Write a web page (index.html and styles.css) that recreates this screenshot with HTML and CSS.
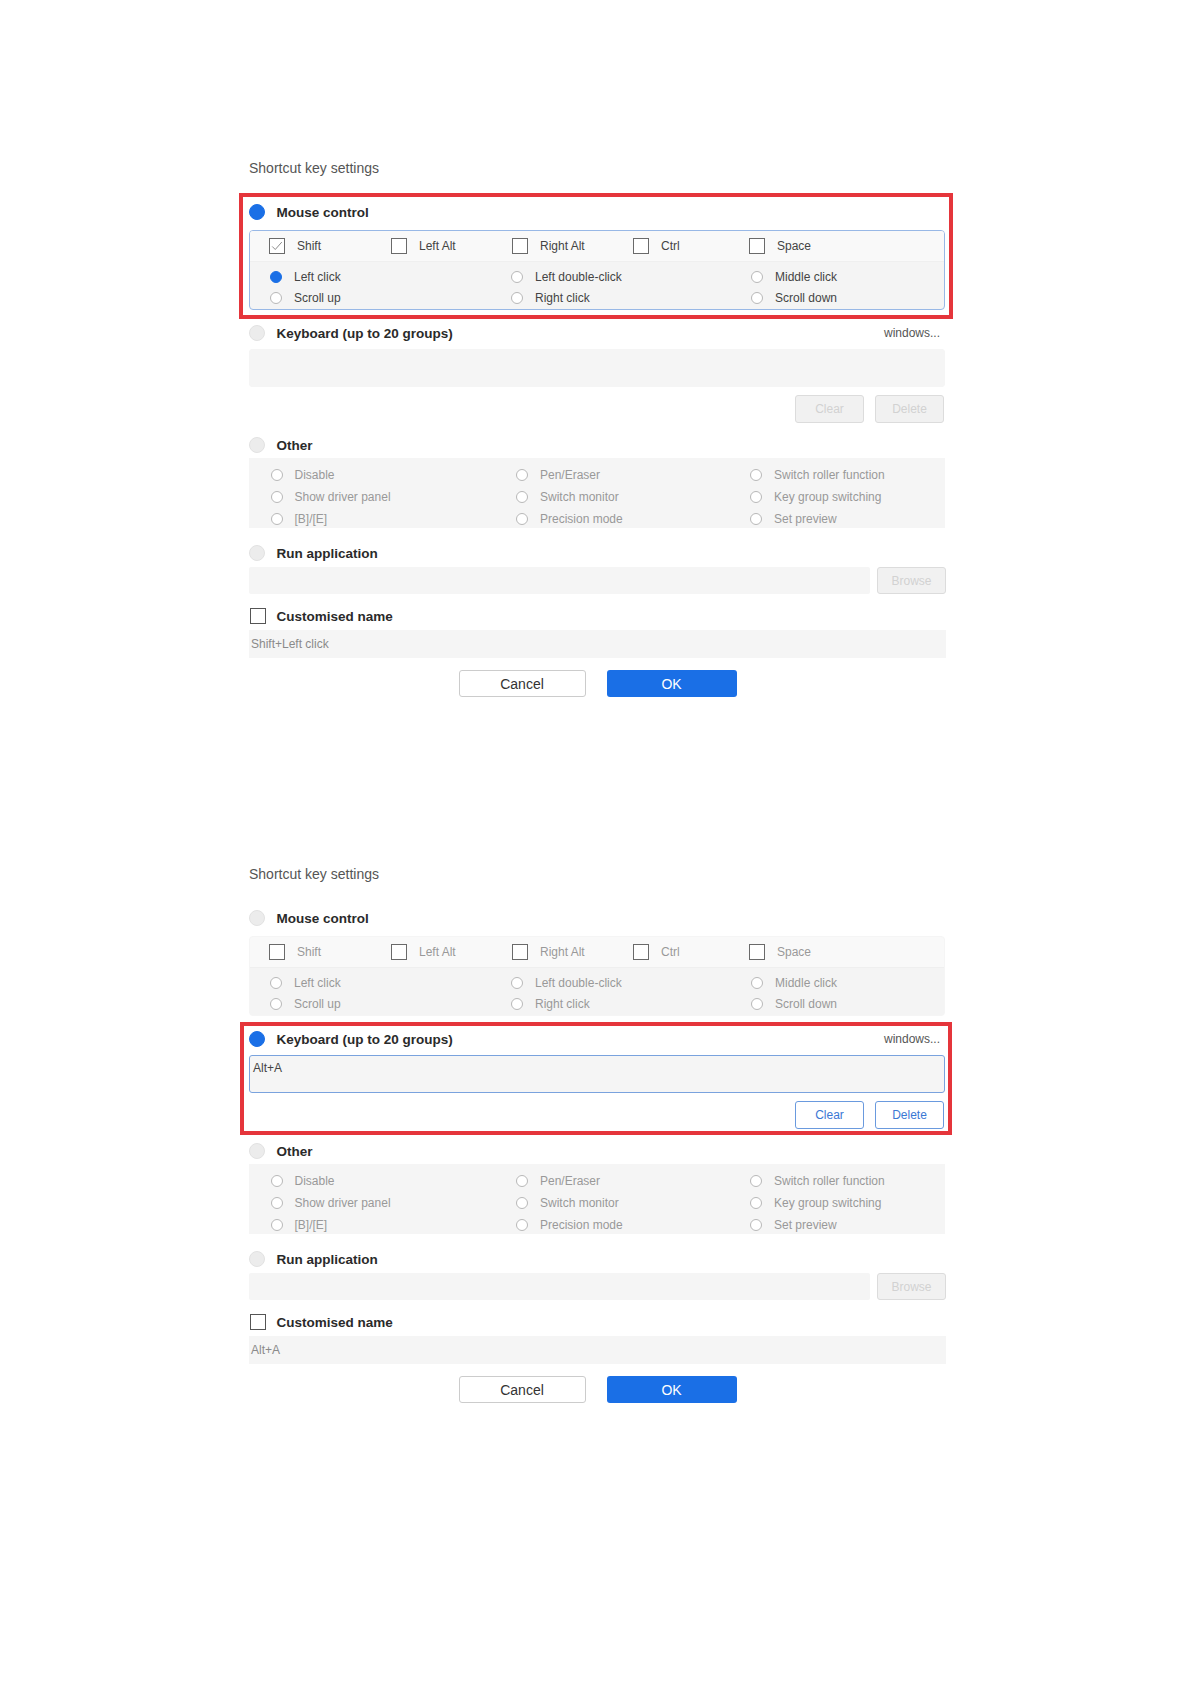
FILE: index.html
```html
<!DOCTYPE html>
<html lang="en">
<head>
<meta charset="utf-8">
<title>Shortcut key settings</title>
<link rel="stylesheet" href="styles.css">
</head>
<body>
<div class="page">

  <section class="panel">
    <div class="title">Shortcut key settings</div>

    <div class="heading mouse-h"><span class="hradio on"></span><span class="htext">Mouse control</span></div>
    <div class="mbox active">
      <div class="keys">
        <div class="ck"><span class="cbox"><svg viewBox="0 0 16 16" width="14" height="14"><path d="M2.5 8.5 L6 12 L13.5 3.5" fill="none" stroke="#7a7a7a" stroke-width="1"/></svg></span>Shift</div>
        <div class="ck"><span class="cbox"></span>Left Alt</div>
        <div class="ck"><span class="cbox"></span>Right Alt</div>
        <div class="ck"><span class="cbox"></span>Ctrl</div>
        <div class="ck"><span class="cbox"></span>Space</div>
      </div>
      <div class="mopts">
        <div class="opt"><span class="rd on"></span>Left click</div>
        <div class="opt"><span class="rd"></span>Left double-click</div>
        <div class="opt"><span class="rd"></span>Middle click</div>
        <div class="opt"><span class="rd"></span>Scroll up</div>
        <div class="opt"><span class="rd"></span>Right click</div>
        <div class="opt"><span class="rd"></span>Scroll down</div>
      </div>
    </div>

    <div class="heading kbd-h"><span class="hradio"></span><span class="htext">Keyboard (up to 20 groups)</span><span class="wintext">windows...</span></div>
    <div class="kbd"></div>
    <div class="krow"><span class="sbtn">Clear</span><span class="sbtn">Delete</span></div>

    <div class="heading other-h"><span class="hradio"></span><span class="htext">Other</span></div>
    <div class="obox">
      <div class="opt"><span class="rd"></span>Disable</div>
      <div class="opt"><span class="rd"></span>Pen/Eraser</div>
      <div class="opt"><span class="rd"></span>Switch roller function</div>
      <div class="opt"><span class="rd"></span>Show driver panel</div>
      <div class="opt"><span class="rd"></span>Switch monitor</div>
      <div class="opt"><span class="rd"></span>Key group switching</div>
      <div class="opt"><span class="rd"></span>[B]/[E]</div>
      <div class="opt"><span class="rd"></span>Precision mode</div>
      <div class="opt"><span class="rd"></span>Set preview</div>
    </div>

    <div class="heading run-h"><span class="hradio"></span><span class="htext">Run application</span></div>
    <div class="runrow"><div class="runinput"></div><span class="sbtn browse">Browse</span></div>

    <div class="heading name-h"><span class="cbox hbox"></span><span class="htext">Customised name</span></div>
    <div class="nameinput">Shift+Left click</div>

    <div class="actions"><span class="btn cancel">Cancel</span><span class="btn ok">OK</span></div>

    <div class="annot a1"></div>
  </section>

  <section class="panel">
    <div class="title">Shortcut key settings</div>

    <div class="heading mouse-h"><span class="hradio"></span><span class="htext">Mouse control</span></div>
    <div class="mbox off">
      <div class="keys">
        <div class="ck"><span class="cbox"></span>Shift</div>
        <div class="ck"><span class="cbox"></span>Left Alt</div>
        <div class="ck"><span class="cbox"></span>Right Alt</div>
        <div class="ck"><span class="cbox"></span>Ctrl</div>
        <div class="ck"><span class="cbox"></span>Space</div>
      </div>
      <div class="mopts">
        <div class="opt"><span class="rd"></span>Left click</div>
        <div class="opt"><span class="rd"></span>Left double-click</div>
        <div class="opt"><span class="rd"></span>Middle click</div>
        <div class="opt"><span class="rd"></span>Scroll up</div>
        <div class="opt"><span class="rd"></span>Right click</div>
        <div class="opt"><span class="rd"></span>Scroll down</div>
      </div>
    </div>

    <div class="heading kbd-h"><span class="hradio on"></span><span class="htext">Keyboard (up to 20 groups)</span><span class="wintext">windows...</span></div>
    <div class="kbd active">Alt+A</div>
    <div class="krow"><span class="sbtn on">Clear</span><span class="sbtn on">Delete</span></div>

    <div class="heading other-h"><span class="hradio"></span><span class="htext">Other</span></div>
    <div class="obox">
      <div class="opt"><span class="rd"></span>Disable</div>
      <div class="opt"><span class="rd"></span>Pen/Eraser</div>
      <div class="opt"><span class="rd"></span>Switch roller function</div>
      <div class="opt"><span class="rd"></span>Show driver panel</div>
      <div class="opt"><span class="rd"></span>Switch monitor</div>
      <div class="opt"><span class="rd"></span>Key group switching</div>
      <div class="opt"><span class="rd"></span>[B]/[E]</div>
      <div class="opt"><span class="rd"></span>Precision mode</div>
      <div class="opt"><span class="rd"></span>Set preview</div>
    </div>

    <div class="heading run-h"><span class="hradio"></span><span class="htext">Run application</span></div>
    <div class="runrow"><div class="runinput"></div><span class="sbtn browse">Browse</span></div>

    <div class="heading name-h"><span class="cbox hbox"></span><span class="htext">Customised name</span></div>
    <div class="nameinput">Alt+A</div>

    <div class="actions"><span class="btn cancel">Cancel</span><span class="btn ok">OK</span></div>

    <div class="annot a2"></div>
  </section>

</div>
</body>
</html>
```

FILE: styles.css
```css
html, body {
  margin: 0;
  background: #ffffff;
}

body {
  font-family: "Liberation Sans", Arial, sans-serif;
  color: #333;
}

.page {
  padding-left: 249px;
  padding-top: 158px;
  padding-bottom: 40px;
}

.panel {
  position: relative;
  width: 696px;
}

.panel + .panel {
  margin-top: 167px;
}

.title {
  height: 20px;
  line-height: 20px;
  font-size: 14px;
  color: #555;
}

.heading {
  display: flex;
  align-items: center;
  height: 24px;
}

.mouse-h { margin-top: 22px; }
.kbd-h { margin-top: 11px; }
.other-h { margin-top: 10px; }
.run-h { margin-top: 13px; }
.name-h { margin-top: 10px; }

.hradio {
  flex: none;
  width: 16px;
  height: 16px;
  border-radius: 50%;
  box-sizing: border-box;
  background: #ececec;
  border: 1px solid #e2e2e2;
  margin-right: 11.5px;
}

.hradio.on {
  background: #1a6fe6;
  border-color: #1a6fe6;
}

.htext {
  font-weight: bold;
  font-size: 13.5px;
  color: #2a2a2a;
}

.wintext {
  margin-left: auto;
  margin-right: 5px;
  font-size: 12px;
  color: #555;
}

/* Mouse control box */
.mbox {
  margin-top: 6px;
  height: 80px;
  box-sizing: border-box;
  border: 1px solid #f5f5f5;
  border-radius: 4px;
  background: #f4f4f4;
  overflow: hidden;
}

.mbox.active {
  border-color: #98b8e6;
}

.keys {
  height: 30px;
  display: grid;
  grid-template-columns: 122px 121px 121px 116px auto;
  align-items: center;
  padding-left: 19px;
  background: #f9f9f9;
  border-bottom: 1px solid #efefef;
}

.ck {
  display: flex;
  align-items: center;
  font-size: 12px;
  color: #444;
}

.mbox.off .ck,
.mbox.off .opt {
  color: #999;
}

.cbox {
  flex: none;
  width: 16px;
  height: 16px;
  box-sizing: border-box;
  border: 1px solid #6a6a6a;
  background: #ffffff;
  margin-right: 12px;
  display: flex;
  align-items: center;
  justify-content: center;
}

.cbox.hbox {
  margin-left: 0.5px;
  margin-right: 11px;
  border-color: #555;
}

.mopts {
  padding-top: 4px;
  padding-left: 20px;
  display: grid;
  grid-template-columns: 241px 240px auto;
  grid-auto-rows: 21px;
}

.opt {
  display: flex;
  align-items: center;
  font-size: 12px;
  color: #444;
}

.rd {
  flex: none;
  width: 12px;
  height: 12px;
  box-sizing: border-box;
  border-radius: 50%;
  border: 1px solid #b8b8b8;
  background: #ffffff;
  margin-right: 12px;
}

.rd.on {
  background: #1a6fe6;
  border-color: #1a6fe6;
}

/* Keyboard */
.kbd {
  margin-top: 4px;
  height: 38px;
  box-sizing: border-box;
  background: #f5f5f5;
  border: 1px solid #f5f5f5;
  border-radius: 3px;
  font-size: 12px;
  line-height: 15px;
  padding: 5px 3px;
  color: #444;
}

.kbd.active {
  border-color: #7aa3de;
}

.krow {
  margin-top: 8px;
  height: 28px;
  display: flex;
  justify-content: flex-end;
  gap: 11px;
  padding-right: 1px;
}

.sbtn {
  width: 69px;
  height: 28px;
  box-sizing: border-box;
  border: 1px solid #dcdcdc;
  border-radius: 3px;
  background: #f1f1f1;
  color: #d2d2d2;
  font-size: 12px;
  display: flex;
  align-items: center;
  justify-content: center;
}

.sbtn.on {
  background: #ffffff;
  border-color: #6a9ade;
  color: #3b78d4;
}

/* Other */
.obox {
  margin-top: 1px;
  height: 70px;
  box-sizing: border-box;
  background: #f5f5f5;
  padding-top: 6px;
  padding-left: 21.5px;
  display: grid;
  grid-template-columns: 245.5px 234px auto;
  grid-auto-rows: 22px;
}

.obox .opt {
  color: #999;
}

/* Run application */
.runrow {
  margin-top: 2px;
  display: flex;
  height: 27px;
  width: 697px;
}

.runinput {
  width: 621px;
  background: #f5f5f5;
  border-radius: 2px;
}

.sbtn.browse {
  margin-left: 7px;
  height: 27px;
  width: 69px;
}

/* Name */
.nameinput {
  margin-top: 2px;
  height: 28px;
  line-height: 28px;
  width: 697px;
  background: #f5f5f5;
  font-size: 12px;
  color: #8a8a8a;
  padding-left: 2px;
  box-sizing: border-box;
}

/* Actions */
.actions {
  margin-top: 12px;
  display: flex;
  justify-content: center;
  gap: 21px;
  padding-left: 1px;
}

.btn {
  height: 27px;
  box-sizing: border-box;
  border-radius: 3px;
  font-size: 14px;
  display: flex;
  align-items: center;
  justify-content: center;
}

.btn.cancel {
  width: 127px;
  background: #ffffff;
  border: 1px solid #cccccc;
  color: #333;
}

.btn.ok {
  width: 130px;
  background: #1a6fe6;
  color: #ffffff;
}

/* Annotation frames */
.annot {
  position: absolute;
  box-sizing: border-box;
  border: 4px solid #e5353b;
  pointer-events: none;
}

.a1 {
  left: -10px;
  top: 35px;
  width: 714px;
  height: 126px;
}

.a2 {
  left: -9px;
  top: 158px;
  width: 712px;
  height: 113px;
}
```
